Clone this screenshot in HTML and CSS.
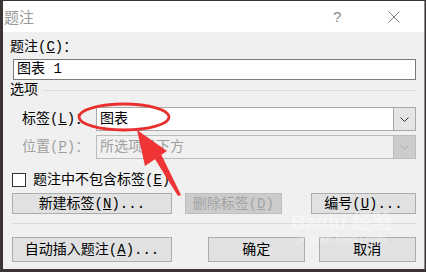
FILE: index.html
```html
<!DOCTYPE html>
<html lang="zh-CN">
<head>
<meta charset="utf-8">
<link rel="stylesheet" href="styles.css">
</head>
<body>
<div class="win">
  <div class="titlebar">
    <span class="title">题注</span>
    <span class="help">?</span>
    <svg class="close" width="12" height="12" viewBox="0 0 12 12"><path d="M0.5 0.5 L11.5 11.5 M11.5 0.5 L0.5 11.5" stroke="#7a7a7a" stroke-width="1" fill="none"/></svg>
  </div>
  <div class="content">
    <div class="lbl cap-lbl">题注(<u>C</u>)：</div>
    <div class="textbox">图表 1</div>
    <div class="group"><span class="glbl">选项</span><span class="gline"></span></div>
    <div class="row r-label">
      <span class="rlbl">标签(<u>L</u>)：</span>
      <div class="combo"><span class="ctext">图表</span><span class="dd"><svg width="9" height="5" viewBox="0 0 9 5"><path d="M0.5 0.5 L4.5 4.5 L8.5 0.5" stroke="#333" fill="none"/></svg></span></div>
    </div>
    <div class="row r-pos">
      <span class="rlbl dis">位置(<u>P</u>)：</span>
      <div class="combo combo-dis"><span class="ctext">所选项目下方</span><span class="dd"><svg width="9" height="5" viewBox="0 0 9 5"><path d="M0.5 0.5 L4.5 4.5 L8.5 0.5" stroke="#a8a8a8" fill="none"/></svg></span></div>
    </div>
    <div class="row r-check">
      <span class="chk"></span><span class="chklbl">题注中不包含标签(<u>E</u>)</span>
    </div>
    <div class="row btns1">
      <div class="btn b-new">新建标签(<u>N</u>)...</div>
      <div class="btn btn-dis b-del">删除标签(<u>D</u>)</div>
      <div class="btn b-num">编号(<u>U</u>)...</div>
    </div>
    <div class="sep"></div>
    <div class="row btns2">
      <div class="btn b-auto">自动插入题注(<u>A</u>)...</div>
      <div class="btn b-ok">确定</div>
      <div class="btn b-cancel">取消</div>
    </div>
  </div>
  <div class="watermark"><span class="wm1">Baidu 经验</span><span class="wm2">jingyan.baidu.com</span></div>
  <svg class="annot" width="426" height="272" viewBox="0 0 426 272">
    <ellipse cx="124" cy="117" rx="45" ry="13" fill="none" stroke="#e8302f" stroke-width="2.8"/>
    <polygon points="137,130 145,166 167,151" fill="#ee3434"/>
    <polygon points="153,156 160,152 181,195 178,196" fill="#ee3434"/>
  </svg>
</div>
</body>
</html>
```
FILE: styles.css
```css
html, body {
  margin: 0;
  padding: 0;
}
body {
  width: 426px;
  height: 272px;
  background: #3b3434;
  font-family: "Liberation Mono", "Noto Sans CJK SC", monospace;
  font-size: 14px;
  color: #000;
  overflow: hidden;
}
u { text-decoration: underline; text-underline-offset: 1px; }
.win {
  position: relative;
  margin-left: 3px;
  margin-top: 1px;
  width: 421px;
  height: 268px;
  background: #f0f0f0;
  border-right: 1px solid #8a8a8a;
  display: flex;
  flex-direction: column;
}
.titlebar {
  height: 31px;
  background: #fff;
  display: flex;
  align-items: center;
  flex-shrink: 0;
}
.title {
  font-family: "Noto Sans CJK SC", sans-serif;
  font-size: 15px;
  color: #9a9a9a;
  padding-left: 1px;
  line-height: 16px;
}
.help {
  margin-left: auto;
  font-family: "Liberation Sans", sans-serif;
  font-size: 15px;
  color: #888;
  width: 12px;
  line-height: 16px;
}
.close {
  margin-left: 43px;
  margin-right: 24px;
  margin-top: 1px;
}
.content {
  padding: 0 8px 0 6px;
  display: flex;
  flex-direction: column;
}
.lbl { line-height: 16px; height: 16px; }
.cap-lbl { margin-top: 7px; padding-left: 1px; }
.textbox {
  margin-top: 4px;
  margin-left: 4px;
  height: 21px;
  box-sizing: border-box;
  border: 1px solid #7a7a7a;
  background: #fff;
  line-height: 18px;
  padding-left: 3px;
}
.group {
  margin-top: 2px;
  height: 16px;
  display: flex;
  align-items: center;
  line-height: 16px;
}
.glbl { padding-left: 1px; }
.gline {
  flex: 1;
  height: 1px;
  background: #dcdcdc;
  margin-left: 4px;
}
.row { display: flex; align-items: center; }
.r-label { margin-top: 9px; height: 24px; }
.r-pos { margin-top: 4px; height: 24px; }
.rlbl { width: 74px; padding-left: 13px; line-height: 16px; white-space: nowrap; }
.dis { color: #a0a0a0; }
.combo {
  flex: 1;
  height: 24px;
  box-sizing: border-box;
  border: 1px solid #a8a8a8;
  background: #fff;
  display: flex;
  align-items: center;
}
.ctext { flex: 1; padding-left: 3px; line-height: 16px; }
.dd {
  width: 21px;
  height: 22px;
  background: #e5e5e5;
  border-left: 1px solid #a8a8a8;
  display: flex;
  align-items: center;
  justify-content: center;
}
.combo-dis { background: #f0f0f0; border-color: #bcbcbc; }
.combo-dis .ctext { color: #a0a0a0; }
.combo-dis .dd { background: #cccccc; border-left-color: #bcbcbc; }
.r-check { margin-top: 13px; height: 16px; padding-left: 3px; }
.chk {
  width: 14px;
  height: 14px;
  box-sizing: border-box;
  border: 1px solid #333;
  background: #fff;
}
.chklbl { margin-left: 7px; line-height: 16px; }
.btns1 { margin-top: 5px; height: 21px; padding-left: 3px; }
.btn {
  box-sizing: border-box;
  height: 100%;
  border: 1px solid #adadad;
  background: #e1e1e1;
  display: flex;
  align-items: center;
  justify-content: center;
  line-height: 16px;
  white-space: nowrap;
}
.btn-dis { background: #cccccc; border-color: #bfbfbf; color: #a3a3a3; }
.b-new { width: 161px; }
.b-del { width: 98px; margin-left: 13px; }
.b-num { width: 106px; margin-left: 29px; }
.sep { margin-top: 9px; margin-left: 3px; height: 1px; background: #dadada; }
.btns2 { margin-top: 13px; height: 25px; padding-left: 3px; }
.b-auto { width: 161px; }
.b-ok { width: 97px; margin-left: 36px; }
.b-cancel { width: 98px; margin-left: 14px; }
.watermark {
  position: absolute;
  left: 288px;
  top: 210px;
  display: flex;
  flex-direction: column;
  align-items: center;
  color: #fff;
  opacity: 0.4;
  pointer-events: none;
}
.wm1 { font-family: "Liberation Sans", sans-serif; font-size: 20px; font-weight: bold; line-height: 22px; }
.wm2 { font-family: "Liberation Sans", sans-serif; font-size: 11px; line-height: 12px; }
.annot {
  position: absolute;
  left: -3px;
  top: -1px;
  pointer-events: none;
}
```
